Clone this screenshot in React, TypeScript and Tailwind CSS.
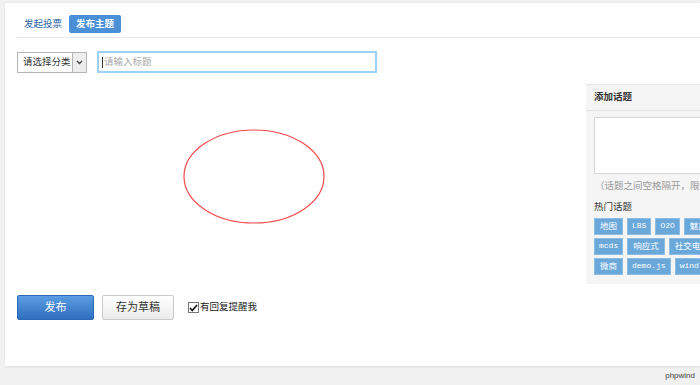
import React from 'react';

const cjk = "font-['Liberation_Sans','Noto_Sans_CJK_SC',sans-serif]";
const mono = "font-['Liberation_Mono','Noto_Sans_CJK_SC',monospace]";

const tagRows = [
  [
    { label: '地图', latin: false },
    { label: 'LBS', latin: true },
    { label: 'O2O', latin: true },
    { label: '魅族手机', latin: false },
  ],
  [
    { label: 'mcds', latin: true },
    { label: '响应式', latin: false },
    { label: '社交电商', latin: false },
  ],
  [
    { label: '微商', latin: false },
    { label: 'demo.js', latin: true },
    { label: 'wind.js', latin: true },
  ],
];

const Tag = ({ label, latin }: any) => {
  return (
    <span
      className={`h-[17px] shrink-0 flex items-center bg-[#6aa8da] border border-[#8dbde4] text-white whitespace-nowrap ${
        latin ? `${mono} text-[8px] px-[4px]` : `${cjk} text-[8.5px] px-[5px]`
      }`}
    >
      {label}
    </span>
  );
};

const TopicPanel = () => {
  return (
    <div className="w-[200px] shrink-0 mt-[11px] h-[200px] bg-[#f5f5f5] border-t border-[#e6e6e6]">
      <div className="h-[26px] flex items-center pl-[8px] border-b border-[#e2e2e2]">
        <span className={`${cjk} text-[9.5px] font-bold text-[#333]`}>添加话题</span>
      </div>
      <div className="ml-[8px] mt-[6px] h-[57px] bg-white border border-[#d6d6d6]" />
      <div className={`${cjk} ml-[9px] mt-[5px] text-[9.5px] text-[#999] whitespace-nowrap`}>
        （话题之间空格隔开，限5个）
      </div>
      <div className={`${cjk} ml-[8px] mt-[7px] text-[9.5px] text-[#333]`}>热门话题</div>
      <div className="ml-[8px] mt-[3px] flex flex-col gap-[3px]">
        {tagRows.map((row, i) => (
          <div key={i} className="flex gap-[4px]">
            {row.map((t) => (
              <Tag key={t.label} label={t.label} latin={t.latin} />
            ))}
          </div>
        ))}
      </div>
    </div>
  );
};

const App = () => {
  return (
    <div className="w-[700px] h-[385px] bg-[#f1f1f1] overflow-hidden flex flex-col">
      <div className="ml-[5px] mt-[3px] h-[364px] bg-white border-b border-[#e3e3e3] shadow-[0_0_2px_rgba(0,0,0,0.08)] overflow-hidden">
        <div className="ml-[12px] pt-[12px] pb-[4px] border-b border-[#e8e8e8] flex">
          <span className={`${cjk} h-[18px] px-[7px] flex items-center text-[9.5px] text-[#2a5ea6]`}>发起投票</span>
          <span
            className={`${cjk} h-[18px] px-[7px] flex items-center text-[9.5px] font-bold text-white bg-[#4a90d6] rounded-[2px]`}
          >
            发布主题
          </span>
        </div>

        <div className="ml-[12px] mt-[13px] flex items-center gap-[10px]">
          <div className="w-[70px] h-[21px] flex border border-[#b5b5b5] bg-white">
            <span className={`${cjk} flex-1 flex items-center pl-[5px] text-[9.5px] text-[#333]`}>请选择分类</span>
            <span className="w-[14px] flex items-center justify-center border-l border-[#b5b5b5] bg-[#ededed]">
              <svg width="7" height="5" viewBox="0 0 7 5">
                <path d="M1 1l2.5 2.5L6 1" fill="none" stroke="#444" strokeWidth="1.3" />
              </svg>
            </span>
          </div>
          <div className="w-[280px] h-[22px] flex items-center border-2 border-[#9dd2f5] bg-white pl-[3px]">
            <span className="w-px h-[11px] bg-[#333] mr-px" />
            <span className={`${cjk} text-[9.5px] text-[#aaa]`}>请输入标题</span>
          </div>
        </div>

        <div className="flex h-[222px]">
          <div className="w-[581px] shrink-0 pl-[178px] pt-[56px]">
            <svg width="142" height="95" viewBox="0 0 142 95">
              <ellipse cx="71" cy="47.5" rx="70" ry="46.5" fill="none" stroke="#f24a4a" strokeWidth="1.2" />
            </svg>
          </div>
          <TopicPanel />
        </div>

        <div className="ml-[12px] flex items-center">
          <button
            type="button"
            className={`${cjk} w-[77px] h-[25px] rounded-[2px] border border-[#2c68b4] bg-gradient-to-b from-[#5b9de2] to-[#2f6fc0] text-white text-[11px]`}
          >
            发布
          </button>
          <button
            type="button"
            className={`${cjk} ml-[8px] w-[72px] h-[25px] rounded-[2px] border border-[#c9c9c9] bg-gradient-to-b from-white to-[#ececec] text-[#333] text-[11px]`}
          >
            存为草稿
          </button>
          <span className="ml-[14px] w-[11px] h-[11px] border border-[#777] bg-white flex items-center justify-center">
            <svg width="9" height="8" viewBox="0 0 9 8">
              <path d="M1 4l2.3 2.5L8 1" fill="none" stroke="#111" strokeWidth="1.6" />
            </svg>
          </span>
          <span className={`${cjk} ml-[1px] text-[9.5px] text-[#222]`}>有回复提醒我</span>
        </div>
      </div>
      <div className="flex-1 flex items-center justify-end pr-[5px]">
        <span className="font-['Liberation_Sans',sans-serif] text-[8px] text-[#444]">phpwind</span>
      </div>
    </div>
  );
};

export default App;
